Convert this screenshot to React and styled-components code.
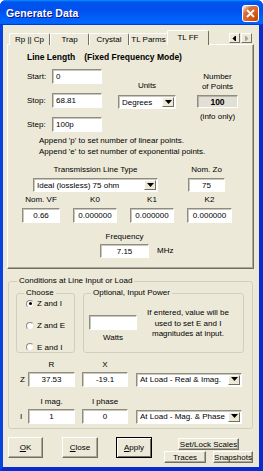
import React from "react";
import styled, { createGlobalStyle } from "styled-components";

const GlobalStyle = createGlobalStyle`
  * { box-sizing: border-box; }
  html, body { margin: 0; padding: 0; background: #fff; }
  body {
    font-family: "Liberation Sans", Arial, sans-serif;
    font-size: 8px;
    color: #000;
  }
`;

const Window = styled.div`
  width: 263px;
  height: 471px;
  display: flex;
  flex-direction: column;
  background: #0831d9;
  border-radius: 6px 6px 0 0;
  overflow: hidden;
`;

const TitleBar = styled.div`
  height: 25px;
  flex: none;
  display: flex;
  align-items: center;
  justify-content: space-between;
  padding: 0 4px 0 6px;
  background: linear-gradient(
    180deg,
    #0997ff 0%,
    #0053ee 8%,
    #0050ee 40%,
    #0066ff 88%,
    #0066ff 93%,
    #005bff 95%,
    #003dd7 96%,
    #003dd7 100%
  );
`;

const Title = styled.span`
  color: #fff;
  font-weight: bold;
  font-size: 10.5px;
  letter-spacing: 0.1px;
  text-shadow: 1px 1px #0f1089;
`;

const CloseButton = styled.div`
  width: 17px;
  height: 17px;
  margin-top: 2px;
  border: 1px solid #fff;
  border-radius: 3px;
  display: flex;
  align-items: center;
  justify-content: center;
  background: radial-gradient(
    circle at 90% 90%,
    #cc4600 0%,
    #dc6527 55%,
    #cd7546 70%,
    #ffccb2 90%,
    #fff 100%
  );
`;

const Frame = styled.div`
  flex: 1;
  display: flex;
  flex-direction: column;
  background: #ece9d8;
  border-left: 3px solid #0842e0;
  border-right: 4px solid #0a2ccf;
  border-bottom: 4px solid #0a2ccf;
`;

const TabStrip = styled.div`
  height: 15px;
  margin: 5px 5px -1px 6px;
  display: flex;
  align-items: flex-end;
  position: relative;
  z-index: 1;
`;

const Tab = styled.div`
  width: ${(p) => p.$w}px;
  height: ${(p) => (p.$active ? 15 : 12)}px;
  margin-left: ${(p) => (p.$active ? -1 : 0)}px;
  display: flex;
  align-items: center;
  justify-content: center;
  padding-bottom: ${(p) => (p.$active ? 2 : 0)}px;
  background: #ece9d8;
  border-top: 1px solid #fff;
  border-left: 1px solid #fff;
  border-right: 1px solid #716f64;
  border-radius: 2px 2px 0 0;
  white-space: nowrap;
`;

const TabScroll = styled.div`
  margin: 0 2px 2px auto;
  display: flex;
`;

const ScrollBtn = styled.div`
  width: 11px;
  height: 10px;
  margin-left: 1px;
  display: flex;
  align-items: center;
  justify-content: center;
  background: #ece9d8;
  border: 1px solid;
  border-color: #fff #716f64 #716f64 #fff;
`;

const Panel = styled.div`
  height: 225px;
  margin: 0 5px 0 4px;
  display: flex;
  flex-direction: column;
  align-items: flex-start;
  border: 1px solid;
  border-color: #fff #716f64 #716f64 #fff;
  box-shadow: inset -1px -1px 0 #aca899;
`;

const Heading = styled.div`
  margin: 7px 0 0 19px;
  line-height: 10px;
  font-size: 8.5px;
  font-weight: bold;
  display: flex;
  gap: 9px;
`;

const Row = styled.div`
  display: flex;
  align-items: ${(p) => p.$align || "flex-start"};
  margin-top: ${(p) => p.$mt || 0}px;
  margin-left: ${(p) => p.$ml || 0}px;
`;

const Column = styled.div`
  display: flex;
  flex-direction: column;
  align-items: ${(p) => p.$align || "center"};
  gap: ${(p) => p.$gap || 0}px;
  margin-top: ${(p) => p.$mt || 0}px;
  margin-left: ${(p) => p.$ml || 0}px;
`;

const Label = styled.span`
  line-height: 10px;
  width: ${(p) => (p.$w ? `${p.$w}px` : "auto")};
  white-space: nowrap;
`;

const FieldRow = styled.div`
  display: flex;
  align-items: center;
`;

const TextBox = styled.div`
  width: ${(p) => p.$w}px;
  height: ${(p) => p.$h || 15}px;
  margin-left: ${(p) => p.$ml || 0}px;
  display: flex;
  align-items: center;
  justify-content: ${(p) => (p.$left ? "flex-start" : "center")};
  padding-left: ${(p) => (p.$left ? 3 : 0)}px;
  background: #fff;
  border: 1px solid;
  border-color: #8f8d80 #fff #fff #8f8d80;
  box-shadow: inset 1px 1px 0 #c9c7bb;
  white-space: nowrap;
`;

const InfoBox = styled.div`
  width: 41px;
  height: 13px;
  margin-top: 3px;
  display: flex;
  align-items: center;
  justify-content: center;
  font-weight: bold;
  font-size: 8.5px;
  background: #e2e0d6;
  border: 1px solid;
  border-color: #8f8d80 #fff #fff #8f8d80;
  box-shadow: inset 1px 1px 0 #b5b3a8;
`;

const Combo = styled.div`
  width: ${(p) => p.$w}px;
  height: ${(p) => p.$h || 14}px;
  margin-left: ${(p) => p.$ml || 0}px;
  display: flex;
  align-items: center;
  background: #fff;
  border: 1px solid;
  border-color: #8f8d80 #fff #fff #8f8d80;
  box-shadow: inset 1px 1px 0 #c9c7bb;
  padding: 1px 1px 1px ${(p) => p.$pad ?? 3}px;
`;

const ComboText = styled.span`
  flex: 1;
  white-space: nowrap;
  overflow: hidden;
`;

const DropBtn = styled.div`
  width: 12px;
  height: 100%;
  display: flex;
  align-items: center;
  justify-content: center;
  background: #ece9d8;
  border: 1px solid;
  border-color: #fff #716f64 #716f64 #fff;
`;

const Note = styled.div`
  margin: 3px 0 0 31px;
  line-height: 11px;
`;

const Group = styled.fieldset`
  width: ${(p) => (p.$w ? `${p.$w}px` : "auto")};
  height: ${(p) => p.$h}px;
  margin: ${(p) => p.$m || 0};
  padding: 0;
  min-width: 0;
  display: flex;
  flex-direction: column;
  border: 1px solid #d0d0bf;
  border-radius: 3px;
`;

const Legend = styled.legend`
  margin-left: ${(p) => p.$ml ?? 8}px;
  padding: 0 2px;
  line-height: 10px;
  font-size: 8px;
`;

const RadioRow = styled.div`
  display: flex;
  align-items: center;
  gap: 3px;
  height: 10px;
  margin: ${(p) => p.$mt}px 0 0 9px;
`;

const RadioDot = styled.span`
  width: 8px;
  height: 8px;
  border-radius: 50%;
  background: #fff;
  border: 1px solid;
  border-color: #8f8d80 #e8e6dc #e8e6dc #8f8d80;
  display: flex;
  align-items: center;
  justify-content: center;
  &::after {
    content: "";
    width: 3px;
    height: 3px;
    border-radius: 50%;
    background: ${(p) => (p.$on ? "#000" : "transparent")};
  }
`;

const InfoText = styled.div`
  width: 86px;
  margin-left: 8px;
  line-height: 10.5px;
  text-align: center;
`;

const SideLabel = styled.span`
  width: 8px;
  line-height: 10px;
`;

const Caption = styled.span`
  width: ${(p) => p.$w}px;
  margin-left: ${(p) => p.$ml || 0}px;
  line-height: 10px;
  text-align: center;
`;

const ButtonBar = styled.div`
  display: flex;
  align-items: flex-start;
  margin: 8px 0 0 5px;
`;

const Button = styled.div`
  width: ${(p) => p.$w}px;
  height: ${(p) => p.$h || 21}px;
  margin-left: ${(p) => p.$ml || 0}px;
  margin-top: ${(p) => p.$mt || 0}px;
  display: flex;
  align-items: center;
  justify-content: center;
  white-space: nowrap;
  background: #ece9d8;
  border: 1px solid;
  border-color: ${(p) =>
    p.$default ? "#000" : "#fff #716f64 #716f64 #fff"};
  box-shadow: ${(p) =>
    p.$default
      ? "inset 1px 1px 0 #fff, inset -1px -1px 0 #716f64"
      : "inset -1px -1px 0 #aca899"};
`;

const ScaleCluster = styled.div`
  margin: 1px 0 0 12px;
  display: flex;
  flex-direction: column;
  align-items: center;
  gap: 1px;
`;

const Arrow = ({ dir = "down", color = "#000" }) => (
  <svg width="7" height="5" viewBox="0 0 7 5">
    {dir === "down" && <polygon points="0,0 7,0 3.5,4" fill={color} />}
    {dir === "left" && <polygon points="4,0 4,7 0.5,3.5" fill={color} transform="translate(1,-1)" />}
    {dir === "right" && <polygon points="1,0 1,7 4.5,3.5" fill={color} transform="translate(1,-1)" />}
  </svg>
);

const Drop = ({ w, text, ml }) => (
  <Combo $w={w} $ml={ml}>
    <ComboText>{text}</ComboText>
    <DropBtn>
      <Arrow />
    </DropBtn>
  </Combo>
);

const Field = ({ label, value, w, h }) => (
  <Column $gap={3}>
    <Label>{label}</Label>
    <TextBox $w={w} $h={h}>
      {value}
    </TextBox>
  </Column>
);

export default function App() {
  return (
    <>
      <GlobalStyle />
      <Window>
        <TitleBar>
          <Title>Generate Data</Title>
          <CloseButton>
            <svg width="9" height="9" viewBox="0 0 9 9">
              <path d="M1 1 L8 8 M8 1 L1 8" stroke="#fff" strokeWidth="1.8" />
            </svg>
          </CloseButton>
        </TitleBar>

        <Frame>
          <TabStrip>
            <Tab $w={41}>Rp || Cp</Tab>
            <Tab $w={39}>Trap</Tab>
            <Tab $w={40}>Crystal</Tab>
            <Tab $w={39}>TL Parms</Tab>
            <Tab $w={42} $active>
              TL FF
            </Tab>
            <TabScroll>
              <ScrollBtn>
                <Arrow dir="left" />
              </ScrollBtn>
              <ScrollBtn>
                <Arrow dir="right" color="#aca899" />
              </ScrollBtn>
            </TabScroll>
          </TabStrip>

          <Panel>
            <Heading>
              <span>Line Length</span>
              <span>(Fixed Frequency Mode)</span>
            </Heading>

            <Row $mt={7} $ml={19}>
              <Column $align="flex-start" $gap={9}>
                <FieldRow>
                  <Label $w={25}>Start:</Label>
                  <TextBox $w={50} $left>
                    0
                  </TextBox>
                </FieldRow>
                <FieldRow>
                  <Label $w={25}>Stop:</Label>
                  <TextBox $w={50} $left>
                    68.81
                  </TextBox>
                </FieldRow>
                <FieldRow>
                  <Label $w={25}>Step:</Label>
                  <TextBox $w={50} $left>
                    100p
                  </TextBox>
                </FieldRow>
              </Column>
              <Column $ml={16} $mt={12} $gap={4}>
                <Label>Units</Label>
                <Drop w={58} text="Degrees" />
              </Column>
              <Column $ml={21} $mt={3}>
                <Label>Number</Label>
                <Label>of Points</Label>
                <InfoBox>100</InfoBox>
                <Label style={{ marginTop: 4 }}>(info only)</Label>
              </Column>
            </Row>

            <Note>
              Append 'p' to set number of linear points.
              <br />
              Append 'e' to set number of exponential points.
            </Note>

            <Row $mt={8} $ml={25}>
              <Column $gap={3}>
                <Label>Transmission Line Type</Label>
                <Drop w={125} text="Ideal (lossless) 75 ohm" />
              </Column>
              <Column $gap={3} $ml={30}>
                <Label>Nom. Zo</Label>
                <TextBox $w={37} $h={14}>
                  75
                </TextBox>
              </Column>
            </Row>

            <Row $mt={3} $ml={14} style={{ gap: 13 }}>
              <Field label="Nom. VF" value="0.66" w={38} />
              <Field label="K0" value="0.000000" w={44} />
              <Field label="K1" value="0.000000" w={44} />
              <Field label="K2" value="0.000000" w={45} />
            </Row>

            <Row $mt={9} $ml={92} $align="flex-end">
              <Column $gap={2}>
                <Label>Frequency</Label>
                <TextBox $w={49} $h={14}>
                  7.15
                </TextBox>
              </Column>
              <Label style={{ marginLeft: 8, marginBottom: 2 }}>MHz</Label>
            </Row>
          </Panel>

          <Group $h={153} $m="7px 6px 0 5px">
            <Legend>Conditions at Line Input or Load</Legend>
            <Row $mt={2} $ml={7}>
              <Group $w={59} $h={65}>
                <Legend $ml={7}>Choose</Legend>
                <RadioRow $mt={1}>
                  <RadioDot $on />
                  <span>Z and I</span>
                </RadioRow>
                <RadioRow $mt={12}>
                  <RadioDot />
                  <span>Z and E</span>
                </RadioRow>
                <RadioRow $mt={12}>
                  <RadioDot />
                  <span>E and I</span>
                </RadioRow>
              </Group>
              <Group $w={161} $h={65} $m="0 0 0 8px">
                <Legend $ml={7}>Optional, Input Power</Legend>
                <Row $mt={10} $ml={5}>
                  <Column $mt={7} $gap={3}>
                    <TextBox $w={48} />
                    <Label>Watts</Label>
                  </Column>
                  <InfoText>
                    If entered, value will be used to set E and I magnitudes at
                    input.
                  </InfoText>
                </Row>
              </Group>
            </Row>

            <Row $mt={7} $ml={19}>
              <Caption $w={47}>R</Caption>
              <Caption $w={46} $ml={7}>
                X
              </Caption>
            </Row>
            <Row $mt={2} $ml={11} $align="center">
              <SideLabel>Z</SideLabel>
              <TextBox $w={47}>37.53</TextBox>
              <TextBox $w={46} $ml={7}>
                -19.1
              </TextBox>
              <Drop w={106} ml={8} text="At Load - Real & Imag." />
            </Row>
            <Row $mt={10} $ml={19}>
              <Caption $w={47}>I mag.</Caption>
              <Caption $w={46} $ml={7}>
                I phase
              </Caption>
            </Row>
            <Row $mt={2} $ml={11} $align="center">
              <SideLabel>I</SideLabel>
              <TextBox $w={47}>1</TextBox>
              <TextBox $w={46} $ml={7}>
                0
              </TextBox>
              <Drop w={106} ml={8} text="At Load - Mag. & Phase" />
            </Row>
          </Group>

          <ButtonBar>
            <Button $w={35}>
              <u>O</u>K
            </Button>
            <Button $w={36} $ml={19}>
              <u>C</u>lose
            </Button>
            <Button $w={36} $ml={18} $default>
              <u>A</u>pply
            </Button>
            <ScaleCluster>
              <Button $w={61} $h={12}>
                Set/Lock Scales
              </Button>
              <Row style={{ gap: 7 }}>
                <Button $w={42} $h={12}>
                  Traces
                </Button>
                <Button $w={40} $h={12}>
                  Snapshots
                </Button>
              </Row>
            </ScaleCluster>
          </ButtonBar>
        </Frame>
      </Window>
    </>
  );
}
